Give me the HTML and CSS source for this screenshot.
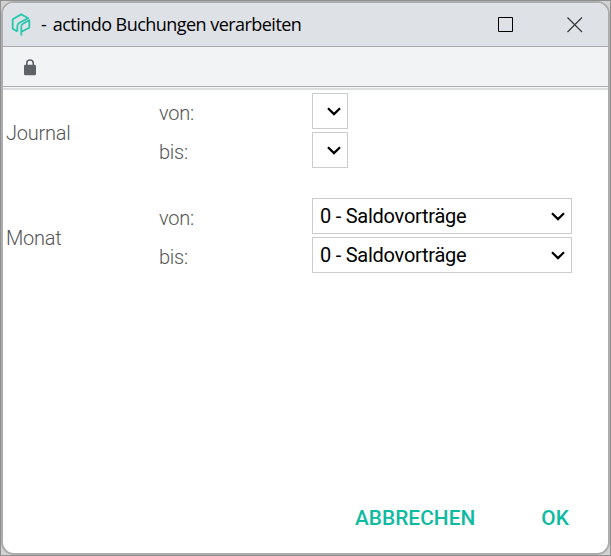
FILE: index.html
```html
<!DOCTYPE html>
<html lang="de">
<head>
<meta charset="utf-8">
<title>actindo Buchungen verarbeiten</title>
<link rel="stylesheet" href="styles.css">
</head>
<body>
<div class="window">
  <header class="titlebar">
    <svg class="logo" width="20" height="24" viewBox="0 0 20 24"><path d="M6.3 18.6 1.7 15.8V6.2L10.2 1.4 17.2 5.2 8.4 9.8Q6.3 11 6.3 13.2V18.6M10.3 22.4V13.8Q10.3 11.6 12.3 10.5L18.3 7.2V14.8L10.3 18.8"/></svg>
    <h1 class="title"><span class="dash">-</span><span class="name">actindo Buchungen verarbeiten</span></h1>
    <svg class="maximize" width="16" height="16" viewBox="0 0 16 16"><path d="M.5.5h14v14H.5z"/></svg>
    <svg class="close" width="16" height="16" viewBox="0 0 16 16"><path d="M.5.5l14.5 14.5M15 .5.5 15"/></svg>
  </header>
  <div class="addressbar">
    <svg width="12" height="17" viewBox="0 0 12 17"><path class="shackle" d="M2.8 7V4.2a3.2 3.2 0 0 1 6.4 0V7"/><rect class="lock" y="5.7" width="12" height="10.6" rx="1.4"/></svg>
  </div>
  <main class="content">
    <section class="group">
      <h2 class="label">Journal</h2>
      <div class="rows">
        <div class="row"><span class="label">von:</span><div class="select small"><svg class="chevron" width="14" height="9" viewBox="0 0 14 9"><path d="M1 1.2 7 7.1 13 1.2"/></svg></div></div>
        <div class="row"><span class="label">bis:</span><div class="select small"><svg class="chevron" width="14" height="9" viewBox="0 0 14 9"><path d="M1 1.2 7 7.1 13 1.2"/></svg></div></div>
      </div>
    </section>
    <section class="group">
      <h2 class="label">Monat</h2>
      <div class="rows">
        <div class="row"><span class="label">von:</span><div class="select"><span>0 - Saldovorträge</span><svg class="chevron" width="14" height="9" viewBox="0 0 14 9"><path d="M1 1.2 7 7.1 13 1.2"/></svg></div></div>
        <div class="row"><span class="label">bis:</span><div class="select"><span>0 - Saldovorträge</span><svg class="chevron" width="14" height="9" viewBox="0 0 14 9"><path d="M1 1.2 7 7.1 13 1.2"/></svg></div></div>
      </div>
    </section>
    <footer class="actions"><button>ABBRECHEN</button><button>OK</button></footer>
  </main>
</div>
</body>
</html>
```
FILE: styles.css
```css
* { box-sizing: border-box; }
body { margin: 0; height: 556px; border: 1px solid #8f8f8f; background: #d2d2d2; font-family: Roboto, sans-serif; font-size: 20px; overflow: hidden; }
.window { height: 554px; border: 2px solid #adadad; border-radius: 13px; background: #fff; overflow: hidden; display: flex; flex-direction: column; }
svg { display: block; fill: none; flex: none; }
.titlebar { height: 44px; flex: none; background: #dee1e6; border-bottom: 1px solid #a9abae; display: flex; align-items: center; padding: 0 25px 0 8px; }
.logo { stroke: #27c9ae; stroke-width: 1.8; stroke-linejoin: round; }
.title { margin: 0 auto 0 10px; padding-bottom: 1px; display: flex; gap: 6px; font: 400 18px/24px "Open Sans", sans-serif; color: #000; white-space: nowrap; }
.name { letter-spacing: -.54px; }
.maximize { stroke: #000; margin-right: 53px; }
.close { stroke: #333; stroke-width: 1.1; }
.addressbar { height: 43px; flex: none; background: #f1f3f4; border-bottom: 2px solid #dcdddf; box-shadow: inset 0 -1px #f7f7f7, inset 0 -2px #abadae; padding: 12px 0 0 21px; }
.lock { fill: #5f6368; }
.shackle { stroke: #5f6368; stroke-width: 1.6; }
.content { flex: 1; display: flex; flex-direction: column; padding: 3px 0 17px 3px; }
.group { display: flex; align-items: center; margin-bottom: 30px; }
.label { margin: 0; font-size: 20px; font-weight: 300; line-height: 24px; letter-spacing: -.25px; color: #555; }
h2.label { width: 153px; padding-top: 4px; }
.rows { display: grid; gap: 3px; }
.row { display: flex; align-items: center; }
.row .label { width: 153px; padding-top: 4px; }
.select { width: 260px; height: 36px; border: 1px solid #ccc; display: flex; align-items: center; justify-content: space-between; padding: 0 6px 0 7px; letter-spacing: -.25px; color: #000; }
.small { width: 36px; justify-content: flex-end; }
.chevron { stroke: #000; stroke-width: 2.2; }
.actions { margin-top: auto; display: flex; justify-content: flex-end; gap: 66px; padding-right: 39px; }
button { border: 0; padding: 0; background: none; color: #0dbba0; font: 500 20.8px/36px Roboto, sans-serif; letter-spacing: .08px; }
```
